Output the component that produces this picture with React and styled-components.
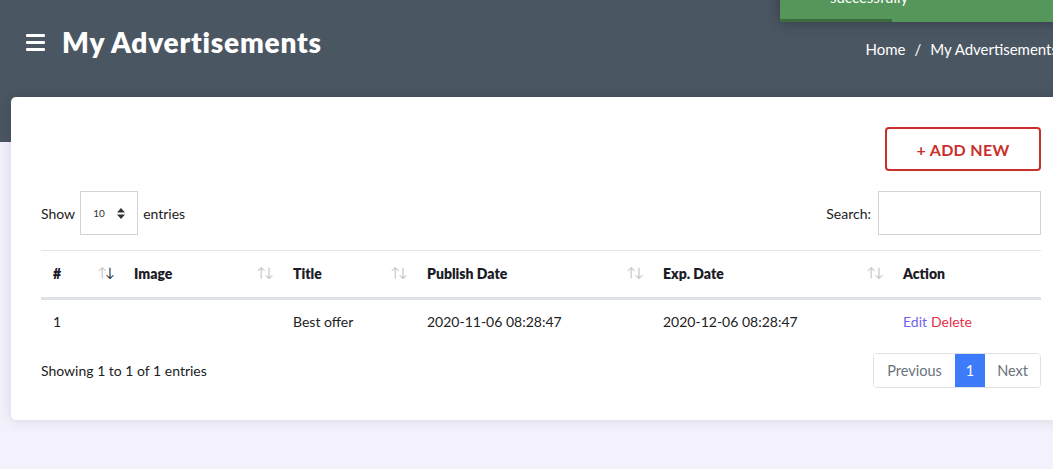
import React from 'react';
import styled, { createGlobalStyle } from 'styled-components';

const GlobalStyle = createGlobalStyle`
  html, body {
    margin: 0;
    padding: 0;
    background: #f3f1fb;
    overflow: hidden;
    font-family: "Lato", "Inter", sans-serif;
  }
`;

const Page = styled.div`
  position: relative;
  width: 1082px;
  min-height: 469px;
`;

const Header = styled.header`
  background: #4b5663;
  height: 142px;
  padding: 0 24px 0 26px;
  display: flex;
  justify-content: space-between;
  align-items: flex-start;
  box-sizing: border-box;
`;

const TitleBlock = styled.div`
  display: flex;
  align-items: center;
  gap: 17px;
  margin-top: 25px;
`;

const Title = styled.h1`
  margin: 0;
  color: #fff;
  font-size: 28px;
  font-weight: 800;
  letter-spacing: 0.8px;
`;

const Burger = styled.span`
  display: flex;
  flex-direction: column;
  gap: 4px;
  width: 19px;
  & > i {
    display: block;
    height: 3px;
    background: #fff;
    border-radius: 1px;
  }
`;

const Crumbs = styled.nav`
  margin-top: 40px;
  color: #fff;
  font-size: 15px;
  display: flex;
  gap: 9px;
`;

const Toast = styled.div`
  position: absolute;
  top: -40px;
  left: 780px;
  width: 320px;
  height: 62px;
  background: #55975a;
  box-shadow: 0 0 12px rgba(0, 0, 0, 0.35);
  color: #fff;
  font-size: 15px;
  box-sizing: border-box;
  padding: 30px 0 0 50px;
  line-height: 14px;
  overflow: hidden;
`;

const Progress = styled.div`
  position: absolute;
  left: 0;
  bottom: 0;
  width: 112px;
  height: 3px;
  background: #3d6b40;
`;

const Card = styled.main`
  margin: -45px 11px 0;
  background: #fff;
  border-radius: 5px;
  box-shadow: 0 0 14px rgba(0, 0, 0, 0.12);
  padding: 30px 30px 32px 30px;
  position: relative;
`;

const TopBar = styled.div`
  display: flex;
  justify-content: flex-end;
`;

const AddButton = styled.button`
  width: 156px;
  height: 44px;
  border: 2px solid #c9302c;
  border-radius: 4px;
  background: #fff;
  color: #c9302c;
  font-family: inherit;
  font-weight: 700;
  font-size: 16px;
  letter-spacing: 0.3px;
`;

const Controls = styled.div`
  display: flex;
  justify-content: space-between;
  align-items: center;
  margin-top: 20px;
  font-size: 14px;
  color: #222;
`;

const Group = styled.label`
  display: flex;
  align-items: center;
  gap: ${p => p.gap || 5}px;
`;

const SelectBox = styled.div`
  width: 58px;
  height: 44px;
  border: 1px solid #d3d3d8;
  box-sizing: border-box;
  display: flex;
  align-items: center;
  justify-content: space-between;
  padding: 0 12px;
  font-size: 10px;
  color: #333;
`;

const SearchInput = styled.input`
  width: 163px;
  height: 44px;
  box-sizing: border-box;
  border: 1px solid #d3d3d8;
  outline: none;
`;

const Table = styled.table`
  width: 1000px;
  margin-top: 15px;
  border-collapse: collapse;
  table-layout: fixed;
  font-size: 14px;
`;

const Th = styled.th`
  position: relative;
  text-align: left;
  font-weight: 800;
  color: #1c1c28;
  padding: 0 12px 2px;
  height: 44px;
  border-top: 1px solid #e3e3e8;
  border-bottom: 3px solid #dee2e6;
`;

const Sort = styled.span`
  position: absolute;
  right: 9px;
  top: 13px;
  font-size: 13px;
  font-weight: 400;
  letter-spacing: -2px;
  color: #c4c4c8;
  & b {
    font-weight: 400;
    color: ${p => (p.active ? '#222a3a' : '#c4c4c8')};
  }
`;

const Td = styled.td`
  padding: 0 12px 3px;
  height: 42px;
  color: #222;
`;

const ActionLink = styled.a`
  color: ${p => p.color};
  margin-right: 4px;
`;

const Footer = styled.div`
  display: flex;
  justify-content: space-between;
  align-items: center;
  margin-top: 8px;
  font-size: 14px;
  color: #222;
`;

const Pager = styled.div`
  display: flex;
  border: 1px solid #dee2e6;
  border-radius: 4px;
  overflow: hidden;
`;

const PageBtn = styled.span`
  height: 33px;
  display: flex;
  align-items: center;
  padding: 0 ${p => p.pad}px;
  font-size: 14.5px;
  color: ${p => (p.active ? '#fff' : '#6c727d')};
  background: ${p => (p.active ? '#3e7bfa' : '#fff')};
`;

const columns = [
  { label: '#', width: 81, active: true },
  { label: 'Image', width: 159 },
  { label: 'Title', width: 134 },
  { label: 'Publish Date', width: 236 },
  { label: 'Exp. Date', width: 240 },
  { label: 'Action', width: 150, nosort: true },
];

export default function App() {
  return (
    <Page>
      <GlobalStyle />
      <Toast>
        successfully
        <Progress />
      </Toast>
      <Header>
        <TitleBlock>
          <Burger><i /><i /><i /></Burger>
          <Title>My Advertisements</Title>
        </TitleBlock>
        <Crumbs>
          <span>Home</span>
          <span>/</span>
          <span>My Advertisements</span>
        </Crumbs>
      </Header>
      <Card>
        <TopBar>
          <AddButton>+ ADD NEW</AddButton>
        </TopBar>
        <Controls>
          <Group>
            Show
            <SelectBox>
              <span>10</span>
              <svg width="8" height="11" viewBox="0 0 8 11">
                <path d="M4 0 L8 4.5 H0 Z M4 11 L8 6.5 H0 Z" fill="#333" />
              </svg>
            </SelectBox>
            entries
          </Group>
          <Group gap={7}>
            Search:
            <SearchInput />
          </Group>
        </Controls>
        <Table>
          <colgroup>
            {columns.map(c => <col key={c.label} style={{ width: c.width }} />)}
          </colgroup>
          <thead>
            <tr>
              {columns.map(c => (
                <Th key={c.label}>
                  {c.label}
                  {!c.nosort && (
                    <Sort active={c.active}>↑<b>↓</b></Sort>
                  )}
                </Th>
              ))}
            </tr>
          </thead>
          <tbody>
            <tr>
              <Td>1</Td>
              <Td></Td>
              <Td>Best offer</Td>
              <Td>2020-11-06 08:28:47</Td>
              <Td>2020-12-06 08:28:47</Td>
              <Td>
                <ActionLink color="#6f62f0">Edit</ActionLink>
                <ActionLink color="#e3304a">Delete</ActionLink>
              </Td>
            </tr>
          </tbody>
        </Table>
        <Footer>
          <span>Showing 1 to 1 of 1 entries</span>
          <Pager>
            <PageBtn pad={13}>Previous</PageBtn>
            <PageBtn pad={11} active>1</PageBtn>
            <PageBtn pad={12}>Next</PageBtn>
          </Pager>
        </Footer>
      </Card>
    </Page>
  );
}
